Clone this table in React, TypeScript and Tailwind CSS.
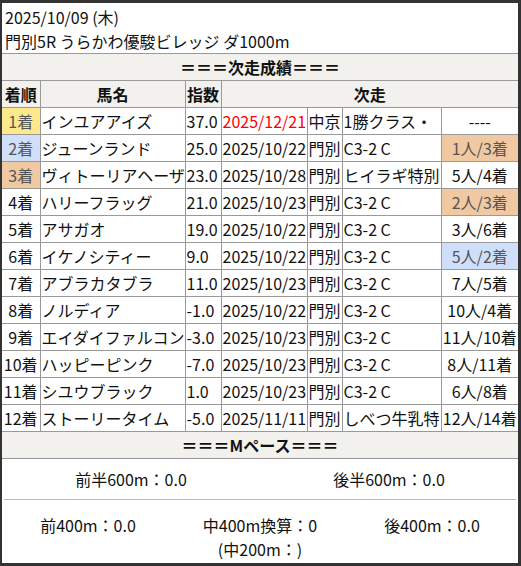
import React from 'react';

type Row = {
  rank: string;
  name: string;
  idx: string;
  date: string;
  place: string;
  race: string;
  result: string;
  rankBg?: string;
  resultBg?: string;
  redDate?: boolean;
};

const rows: Row[] = [
  { rank: '1着', name: 'インユアアイズ', idx: '37.0', date: '2025/12/21', place: '中京', race: '1勝クラス・', result: '----', rankBg: 'bg-[#fde98b] text-[#555]', redDate: true },
  { rank: '2着', name: 'ジューンランド', idx: '25.0', date: '2025/10/22', place: '門別', race: 'C3-2 C', result: '1人/3着', rankBg: 'bg-[#cfdffa] text-[#555]', resultBg: 'bg-[#f0c9a2] text-[#555]' },
  { rank: '3着', name: 'ヴィトーリアヘーザ', idx: '23.0', date: '2025/10/28', place: '門別', race: 'ヒイラギ特別', result: '5人/4着', rankBg: 'bg-[#f0c9a2] text-[#555]' },
  { rank: '4着', name: 'ハリーフラッグ', idx: '21.0', date: '2025/10/23', place: '門別', race: 'C3-2 C', result: '2人/3着', resultBg: 'bg-[#f0c9a2] text-[#555]' },
  { rank: '5着', name: 'アサガオ', idx: '19.0', date: '2025/10/22', place: '門別', race: 'C3-2 C', result: '3人/6着' },
  { rank: '6着', name: 'イケノシティー', idx: '9.0', date: '2025/10/22', place: '門別', race: 'C3-2 C', result: '5人/2着', resultBg: 'bg-[#cfdffa] text-[#555]' },
  { rank: '7着', name: 'アブラカタブラ', idx: '11.0', date: '2025/10/23', place: '門別', race: 'C3-2 C', result: '7人/5着' },
  { rank: '8着', name: 'ノルディア', idx: '-1.0', date: '2025/10/22', place: '門別', race: 'C3-2 C', result: '10人/4着' },
  { rank: '9着', name: 'エイダイファルコン', idx: '-3.0', date: '2025/10/23', place: '門別', race: 'C3-2 C', result: '11人/10着' },
  { rank: '10着', name: 'ハッピーピンク', idx: '-7.0', date: '2025/10/23', place: '門別', race: 'C3-2 C', result: '8人/11着' },
  { rank: '11着', name: 'シユウブラック', idx: '1.0', date: '2025/10/23', place: '門別', race: 'C3-2 C', result: '6人/8着' },
  { rank: '12着', name: 'ストーリータイム', idx: '-5.0', date: '2025/11/11', place: '門別', race: 'しべつ牛乳特', result: '12人/14着' },
];

const cell = 'border border-[#999] px-[1px] py-0 leading-[26px] whitespace-nowrap overflow-visible';

export default function App() {
  return (
    <div className="w-[521px] h-[566px] bg-white border-t-[3px] border-l-2 border-r-[3px] border-b-[3px] border-[#333] text-[16px] text-[#111] font-['Noto_Sans_CJK_JP','Noto_Sans',sans-serif] overflow-hidden">
      {/* Race info */}
      <div className="pt-[2px] pl-[3px] h-[50px] leading-[24px]">
        <div>2025/10/09 (木)</div>
        <div>門別5R うらかわ優駿ビレッジ ダ1000m</div>
      </div>

      <table className="w-[516px] table-fixed border-collapse">
        <colgroup>
          <col className="w-[38px]" />
          <col className="w-[145px]" />
          <col className="w-[36px]" />
          <col className="w-[86px]" />
          <col className="w-[35px]" />
          <col className="w-[99px]" />
          <col className="w-[77px]" />
        </colgroup>
        <tbody>
          <tr className="bg-[#f2f1ed]">
            <td colSpan={7} className={`${cell} border-x-0 text-center font-bold`}>＝＝＝次走成績＝＝＝</td>
          </tr>
          <tr className="bg-[#f2f1ed] font-bold">
            <td className={`${cell} border-l-0 text-center`}>着順</td>
            <td className={`${cell} text-center`}>馬名</td>
            <td className={`${cell} text-center`}>指数</td>
            <td colSpan={4} className={`${cell} border-r-0 text-center`}>次走</td>
          </tr>
          {rows.map((r) => (
            <tr key={r.rank}>
              <td className={`${cell} border-l-0 text-center ${r.rankBg ?? ''}`}>{r.rank}</td>
              <td className={cell}>{r.name}</td>
              <td className={cell}>{r.idx}</td>
              <td className={`${cell} ${r.redDate ? 'text-[#f00]' : ''}`}>{r.date}</td>
              <td className={cell}>{r.place}</td>
              <td className={cell}>{r.race}</td>
              <td className={`${cell} border-r-0 text-center ${r.resultBg ?? ''}`}>{r.result}</td>
            </tr>
          ))}
          <tr className="bg-[#f2f1ed]">
            <td colSpan={7} className={`${cell} border-x-0 text-center font-bold`}>＝＝＝Mペース＝＝＝</td>
          </tr>
        </tbody>
      </table>

      {/* Pace */}
      <div className="grid grid-cols-2 h-[40px] items-center text-center leading-[24px]">
        <div>前半600m：0.0</div>
        <div>後半600m：0.0</div>
      </div>
      <div className="mx-[2px] border-t border-[#bbb]" />
      <div className="grid grid-cols-3 pt-[13px] text-center leading-[24px]">
        <div>前400m：0.0</div>
        <div>
          <div>中400m換算：0</div>
          <div>(中200m：)</div>
        </div>
        <div>後400m：0.0</div>
      </div>
    </div>
  );
}
